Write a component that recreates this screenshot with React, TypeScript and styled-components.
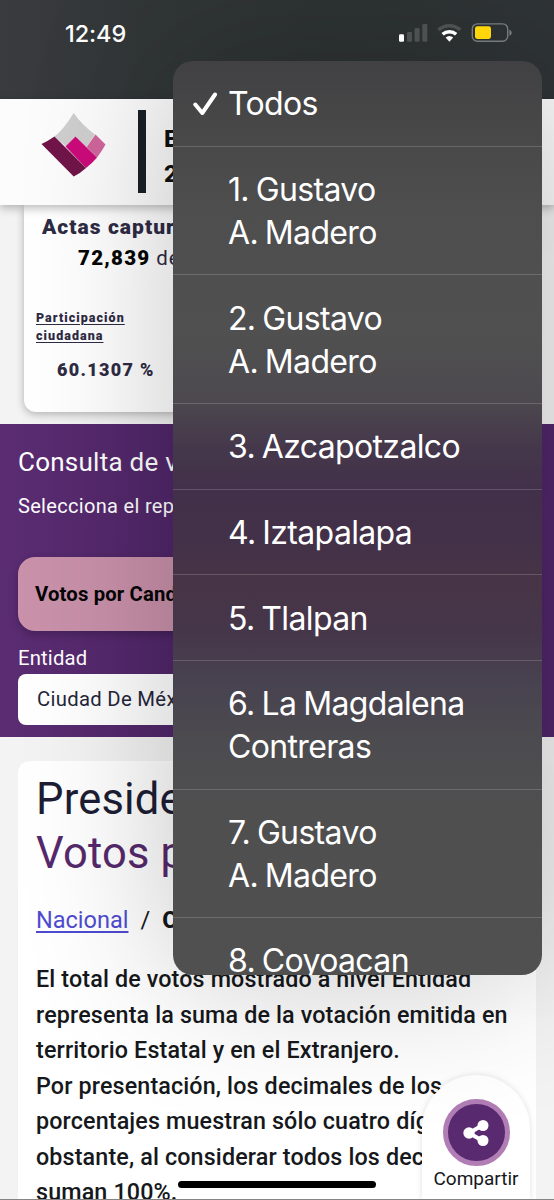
import React from "react";
import styled, { createGlobalStyle } from "styled-components";

const GlobalStyle = createGlobalStyle`
  *, *::before, *::after { box-sizing: border-box; }
  html, body { margin: 0; padding: 0; background: #f3f3f4; }
  p, h1, h2, h3 { margin: 0; font-weight: 400; }
`;

const Screen = styled.div`
  position: relative;
  display: flex;
  flex-direction: column;
  width: 554px;
  height: 1200px;
  overflow: hidden;
  background: #f3f3f4;
  font-family: Roboto, "Liberation Sans", sans-serif;
  color: #16171c;
  white-space: nowrap;
`;

const StatusBar = styled.div`
  display: flex;
  flex: none;
  justify-content: space-between;
  height: 99px;
  padding: 19px 42px 0 65px;
  background: linear-gradient(90deg, #3a3b3e, #313637 25%, #2e3333 60%, #2f3436);
`;

const Clock = styled.span`
  font: 550 23.5px/29px Inter, sans-serif;
  letter-spacing: -0.1px;
  color: #fff;
`;

const StatusIcons = styled.svg`
  position: relative;
  z-index: 3;
  width: 115px;
  height: 28px;
`;

const Header = styled.header`
  position: relative;
  z-index: 1;
  display: flex;
  flex: none;
  height: 106px;
  padding: 11px 0 0 41px;
  background: #fcfcfc;
  box-shadow: 0 3px 9px rgba(0, 0, 0, 0.28);
`;

const Logo = styled.svg`
  width: 65px;
  height: 66px;
  margin-top: 2px;
`;

const HeaderRule = styled.div`
  width: 8px;
  height: 83px;
  margin-left: 32px;
  background: #182026;
`;

const HeaderTitle = styled.h1`
  margin: 12px 0 0 18px;
  font-size: 24px;
  font-weight: 800;
  line-height: 35px;
  color: #111;
`;

const Summary = styled.section`
  flex: none;
  height: 219px;
  padding: 0 24px 12px;
  background: #f3f3f4;
`;

const SummaryCard = styled.div`
  height: 207px;
  padding: 8px 12px 0;
  border-radius: 0 0 12px 12px;
  background: #fff;
  box-shadow: 0 2px 8px rgba(0, 0, 0, 0.28);
  color: #2e2b44;
`;

const SummaryTitle = styled.h2`
  padding-left: 6px;
  font-size: 21px;
  font-weight: 900;
  line-height: 28px;
  letter-spacing: 1.05px;
`;

const Captured = styled.p`
  padding: 2px 0 0 42px;
  font-size: 20.5px;
  line-height: 30px;
  letter-spacing: 0.8px;
  b { font-weight: 900; letter-spacing: 1.25px; color: #050505; }
`;

const Participation = styled.p`
  margin-top: 36px;
  font-size: 12.5px;
  font-weight: 900;
  line-height: 18px;
  letter-spacing: 1.05px;
  text-decoration: underline;
  text-decoration-thickness: 1px;
  text-underline-offset: 2px;
`;

const Percent = styled.p`
  padding: 12px 0 0 21px;
  font-size: 18px;
  font-weight: 900;
  line-height: 26px;
  letter-spacing: 1.3px;
`;

const Query = styled.section`
  flex: none;
  height: 313px;
  padding: 22px 18px 0;
  background: linear-gradient(90deg, #5b2c72, #51276a 31%, #50266a);
  color: #fff;
`;

const QueryTitle = styled.h2`
  font-size: 26px;
  line-height: 33px;
  letter-spacing: 0.25px;
`;

const QueryHint = styled.p`
  margin-top: 13px;
  font-size: 20px;
  line-height: 28px;
  letter-spacing: 0.32px;
`;

const VoteButton = styled.div`
  height: 74px;
  margin-top: 37px;
  padding-left: 17px;
  border-radius: 17px;
  background: #c991aa;
  box-shadow: 0 3px 8px rgba(0, 0, 0, 0.22);
  font-size: 20.3px;
  font-weight: 700;
  line-height: 74px;
  letter-spacing: 0.15px;
  color: #050505;
`;

const FieldLabel = styled.label`
  display: block;
  margin-top: 13px;
  font-size: 20.3px;
  line-height: 28px;
  letter-spacing: 0.15px;
`;

const SelectField = styled.div`
  height: 51px;
  margin-top: 2px;
  padding-left: 19px;
  border-radius: 8px;
  background: #fff;
  font-size: 20.3px;
  line-height: 51px;
  letter-spacing: 0.3px;
  color: #25263a;
`;

const Results = styled.main`
  flex: none;
  height: 463px;
  padding: 24px 18px 0;
`;

const ResultsCard = styled.div`
  height: 439px;
  padding: 12px 18px 0;
  border-radius: 12px 12px 0 0;
  background: #fff;
`;

const ResultsTitle = styled.h2<{ $color: string }>`
  font-size: 43.5px;
  line-height: 54px;
  letter-spacing: 0.2px;
  color: ${(p) => p.$color};
`;

const Breadcrumb = styled.nav`
  display: flex;
  gap: 12px;
  margin-top: 25px;
  font-size: 23.5px;
  line-height: 28px;
  a { color: #4f4bd0; text-decoration: underline; text-decoration-thickness: 1.5px; text-underline-offset: 3px; }
  b { font-weight: 800; }
`;

const Note = styled.p`
  margin-top: 28px;
  font-size: 23.3px;
  font-weight: 500;
  line-height: 35.5px;
  letter-spacing: 0.14px;
  color: #16181b;
`;

const Menu = styled.div`
  position: absolute;
  z-index: 2;
  top: 61px;
  left: 173px;
  width: 369px;
  height: 914px;
  border-radius: 20px;
  box-shadow: 0 0 150px rgba(0, 0, 0, 0.24);
`;

const MenuList = styled.ul`
  height: 100%;
  margin: 0;
  padding: 0;
  overflow: hidden;
  border-radius: 20px;
  list-style: none;
  background: linear-gradient(
    #414143 0, #474748 60px, #4e4e4f 150px, #505050 270px, #4d4a4f 335px,
    #45384b 385px, #42304a 430px, #433149 480px, #473446 520px, #46364a 570px,
    #484350 625px, #4c4b4f 680px, #4f4f50 750px, #505051 914px
  );
`;

const MenuItem = styled.li<{ $lines: number }>`
  display: flex;
  align-items: center;
  height: ${(p) => (p.$lines === 2 ? 128.6 : 85.7)}px;
  padding-top: 1px;
  border-bottom: 1px solid rgba(255, 255, 255, 0.17);
  font: 370 32px/43px Inter, sans-serif;
  letter-spacing: -0.65px;
  word-spacing: -1.5px;
  color: #fff;
`;

const MenuMark = styled.span`
  display: flex;
  flex: none;
  width: 55px;
  padding-left: 20px;
`;

const Share = styled.div`
  position: absolute;
  right: 24px;
  bottom: 0;
  display: flex;
  flex-direction: column;
  align-items: center;
  width: 108px;
  height: 125px;
  padding-top: 24px;
  border-radius: 54px 54px 0 0;
  background: #fff;
  box-shadow: 0 0 6px rgba(0, 0, 0, 0.12);
  font-size: 19px;
  line-height: 26px;
`;

const ShareCircle = styled.span`
  display: flex;
  align-items: center;
  justify-content: center;
  width: 67px;
  height: 67px;
  border: 5px solid #b17db5;
  border-radius: 50%;
  background: #592a70;
`;

const HomeIndicator = styled.div`
  position: absolute;
  bottom: 12px;
  left: 178px;
  width: 198px;
  height: 7px;
  border-radius: 4px;
  background: #000;
`;

const BottomEdge = styled.div`
  position: absolute;
  bottom: 0;
  left: 0;
  width: 100%;
  height: 1px;
  background: #858585;
`;

const districts: string[][] = [
  ["Todos"],
  ["1. Gustavo", "A. Madero"],
  ["2. Gustavo", "A. Madero"],
  ["3. Azcapotzalco"],
  ["4. Iztapalapa"],
  ["5. Tlalpan"],
  ["6. La Magdalena", "Contreras"],
  ["7. Gustavo", "A. Madero"],
  ["8. Coyoacan"],
];

const note = [
  "El total de votos mostrado a nivel Entidad",
  "representa la suma de la votación emitida en",
  "territorio Estatal y en el Extranjero.",
  "Por presentación, los decimales de los",
  "porcentajes muestran sólo cuatro dígitos. No",
  "obstante, al considerar todos los decimales,",
  "suman 100%.",
];

function Lines({ items }: { items: string[] }) {
  return (
    <span>
      {items.map((line, i) => (
        <React.Fragment key={i}>
          {i > 0 && <br />}
          {line}
        </React.Fragment>
      ))}
    </span>
  );
}

export default function App() {
  return (
    <Screen>
      <GlobalStyle />
      <StatusBar>
        <Clock>12:49</Clock>
        <StatusIcons viewBox="397 19 115 28">
          <rect x="399" y="34.3" width="5" height="7.4" rx="1.3" fill="#fff" />
          <g fill="#4d5151">
            <rect x="407" y="32" width="5" height="9.7" rx="1.3" />
            <rect x="414.6" y="28" width="5" height="13.7" rx="1.3" />
            <rect x="422.3" y="24" width="5" height="17.7" rx="1.3" />
          </g>
          <path d="M438.5 29.9a16.2 16.2 0 0 1 21.8 0" fill="none" stroke="#4d5151" strokeWidth="3.6" />
          <path d="M442.6 34.3a10.2 10.2 0 0 1 13.6 0" fill="none" stroke="#fff" strokeWidth="3.5" />
          <path d="M445.6 37.6a5.8 5.8 0 0 1 7.6 0L449.4 41.8z" fill="#fff" />
          <rect x="472.3" y="23.9" width="35.4" height="17.4" rx="5" fill="none" stroke="#777b7b" strokeWidth="1.4" />
          <rect x="475" y="26.3" width="16" height="12.6" rx="2.3" fill="#ffd60a" />
          <path d="M509.4 29.8c3 1 3 4.9 0 5.9z" fill="#777b7b" />
        </StatusIcons>
      </StatusBar>
      <Header>
        <Logo viewBox="41 112 65 66">
          <path d="M73.7 113Q64 129 54.5 136.5L66 146.5L75.5 136.5L86.5 147L95 134.5Q82 125 73.7 113z" fill="#cfcfcf" />
          <path d="M95.5 134.5L105.5 144.5Q102 151 97 157.5L86.7 147z" fill="#cf669c" />
          <path d="M75.5 136.5L97 157.5Q92 163.5 86 168L65.5 146.5z" fill="#cb0b7a" />
          <path d="M54.5 136.5L86 168Q80 173.5 73.7 176.5L41.5 144Q48 141 54.5 136.5z" fill="#711549" />
        </Logo>
        <HeaderRule />
        <HeaderTitle>
          <Lines items={["Elecciones", "2024"]} />
        </HeaderTitle>
      </Header>
      <Summary>
        <SummaryCard>
          <SummaryTitle>Actas capturadas</SummaryTitle>
          <Captured>
            <b>72,839</b> de
          </Captured>
          <Participation>
            <Lines items={["Participación", "ciudadana"]} />
          </Participation>
          <Percent>60.1307 %</Percent>
        </SummaryCard>
      </Summary>
      <Query>
        <QueryTitle>Consulta de votación</QueryTitle>
        <QueryHint>Selecciona el reporte</QueryHint>
        <VoteButton>Votos por Candidatura</VoteButton>
        <FieldLabel>Entidad</FieldLabel>
        <SelectField>Ciudad De México</SelectField>
      </Query>
      <Results>
        <ResultsCard>
          <ResultsTitle $color="#1d1e35">Presidencia</ResultsTitle>
          <ResultsTitle $color="#56296c">Votos por</ResultsTitle>
          <Breadcrumb>
            <a>Nacional</a>
            <span>/</span>
            <b>Ciudad</b>
          </Breadcrumb>
          <Note>
            <Lines items={note} />
          </Note>
        </ResultsCard>
      </Results>
      <Menu>
        <MenuList>
          {districts.map((lines, i) => (
            <MenuItem key={i} $lines={lines.length}>
              <MenuMark>
                {i === 0 && (
                  <svg width="25" height="26" viewBox="0 0 25 26">
                    <path d="M2.3 13.5L9.3 22L22 3.5" fill="none" stroke="#fff" strokeWidth="4" strokeLinecap="round" strokeLinejoin="round" />
                  </svg>
                )}
              </MenuMark>
              <Lines items={lines} />
            </MenuItem>
          ))}
        </MenuList>
      </Menu>
      <Share>
        <ShareCircle>
          <svg width="28" height="28" viewBox="0 0 28 28" fill="#fff">
            <path d="M21 6L7 14L21 22" fill="none" stroke="#fff" strokeWidth="4" />
            <circle cx="7" cy="14" r="5.7" />
            <circle cx="21" cy="6.5" r="5.5" />
            <circle cx="21" cy="21.5" r="5.5" />
          </svg>
        </ShareCircle>
        Compartir
      </Share>
      <HomeIndicator />
      <BottomEdge />
    </Screen>
  );
}
